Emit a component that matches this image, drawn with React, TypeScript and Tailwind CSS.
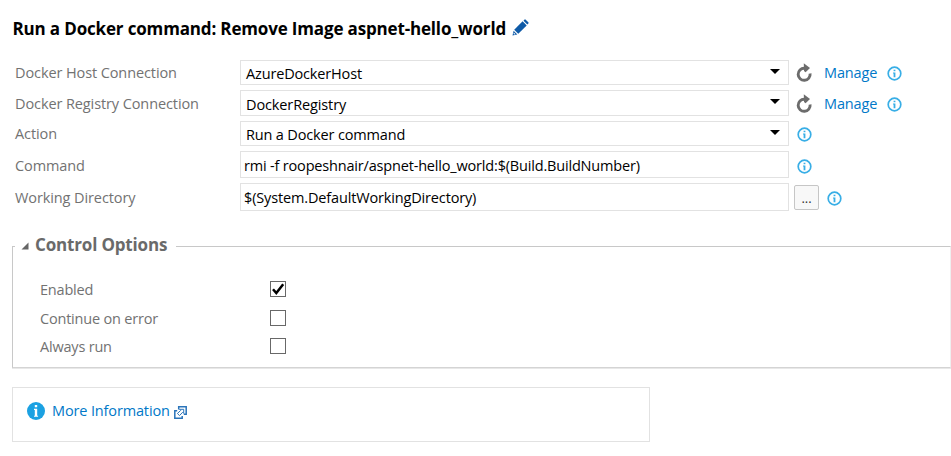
import type { ReactNode } from 'react';

function InfoIcon() {
  return (
    <svg className="block h-[15px] w-[15px] shrink-0" viewBox="0 0 15 15">
      <circle cx="7.5" cy="7.5" r="6.3" fill="#fff" stroke="#38aee6" strokeWidth="1.7" />
      <rect x="6.6" y="3.7" width="1.8" height="1.5" fill="#38aee6" />
      <path d="M6 6.4h2.4v4.8H6.6V7.4H6z" fill="#38aee6" />
    </svg>
  );
}

function RefreshIcon() {
  return (
    <svg className="block h-[19px] w-[17px] shrink-0" viewBox="0 0 17 19">
      <path d="M10 5.3H8.4a6 6 0 1 0 5.7 5.2" fill="none" stroke="#6c6c6c" strokeWidth="2.9" />
      <path d="M7.8 .2 14 4.9 9.6 9.2 8 8z" fill="#6c6c6c" />
    </svg>
  );
}

function PencilIcon() {
  return (
    <svg className="block h-[17px] w-[17px] shrink-0" viewBox="0 0 17 17">
      <path d="M.5 16.5 1.6 11.7 5.3 15.4z" fill="#0e5aa7" />
      <path d="M2.2 10.7 10.6 2.3 14.7 6.4 6.3 14.8z" fill="#0e5aa7" />
      <path d="M11.5 1.7 12.6.6Q13.1.1 13.7.7L16.3 3.3Q16.9 3.9 16.4 4.4L15.3 5.5z" fill="#0e5aa7" />
      <path d="M1.8 13.4 3.6 15.2 2.2 15.5 1.5 14.8z" fill="#fff" />
    </svg>
  );
}

function ExternalIcon() {
  return (
    <svg className="block h-[13px] w-[13px] shrink-0" viewBox="0 0 13 13" fill="none" stroke="#2a74ba" strokeWidth="1.5">
      <path d="M4.7 3.6V.8h7.5v7.5H9.8" />
      <path d="M3.2 4.8H.8v7.4h7.4V9.9" />
      <path d="M5.6 3.3h4.1v4.1L8.6 6.3 5.5 9.6 3.4 7.5 6.7 4.4z" strokeWidth="1" />
    </svg>
  );
}

function Field({
  label,
  labelClass,
  height,
  value,
  valueClass,
  select = false,
  children,
}: {
  label: string;
  labelClass: string;
  height: string;
  value: string;
  valueClass: string;
  select?: boolean;
  children: ReactNode;
}) {
  return (
    <div className={`flex items-center ${height}`}>
      <div className={`w-[225px] shrink-0 tracking-[-0.1px] text-[#727272] ${labelClass}`}>{label}</div>
      <div className="flex h-full w-[549px] shrink-0 items-center justify-between border border-[#e2e2e2]">
        <span className={`text-black ${select ? 'pl-[5px]' : 'pl-[3px]'} ${valueClass}`}>{value}</span>
        {select && (
          <svg className="mr-[8px] mb-[3px] block h-[5px] w-[10px]" viewBox="0 0 10 5">
            <path d="M0 0h10L5 5z" fill="#000" />
          </svg>
        )}
      </div>
      {children}
    </div>
  );
}

function Connection({ className }: { className: string }) {
  return (
    <div className={`flex items-center ${className}`}>
      <div className="mb-[1px] ml-[7px]"><RefreshIcon /></div>
      <span className="ml-[11px] w-[62.5px] tracking-[-0.15px] text-[#0078c8]">Manage</span>
      <InfoIcon />
    </div>
  );
}

function Option({ label, checked = false }: { label: string; checked?: boolean }) {
  return (
    <div className="flex h-[16px] items-center">
      <span className="w-[230px] pt-[2px] tracking-[-0.2px] text-[#727272]">{label}</span>
      <span className="flex h-[16px] w-[16px] items-center justify-center border border-[#686868] bg-white">
        {checked && (
          <svg className="block h-[14px] w-[14px]" viewBox="0 0 14 14">
            <path d="M2 7.2 5.3 11 12.2 2.2" fill="none" stroke="#000" strokeWidth="2.5" />
          </svg>
        )}
      </span>
    </div>
  );
}

export default function App() {
  return (
    <div className="h-[456px] w-[951px] overflow-hidden bg-white font-['Open_Sans','Noto_Sans',sans-serif] text-[14.5px] leading-[20px] whitespace-nowrap">
      <div className="flex h-[60px] items-start pt-[18px] pl-[12.5px]">
        <h1 className="w-[499.5px] text-[17px] leading-[22px] font-bold tracking-[-0.16px] text-black">
          Run a Docker command: Remove Image aspnet-hello_world
        </h1>
        <div className="mt-[1px]"><PencilIcon /></div>
      </div>

      <div className="pl-[15px]">
        <Field label="Docker Host Connection" labelClass="" height="h-[25px]" value="AzureDockerHost" valueClass="pt-[2px] tracking-[-0.16px]" select>
          <Connection className="pt-[1px]" />
        </Field>
        <div className="h-[5px]" />
        <Field label="Docker Registry Connection" labelClass="pt-[2px]" height="h-[26px]" value="DockerRegistry" valueClass="pt-[3px] tracking-[-0.12px]" select>
          <Connection className="pt-[2px]" />
        </Field>
        <div className="h-[5px]" />
        <Field label="Action" labelClass="" height="h-[25px]" value="Run a Docker command" valueClass="pt-[2px] tracking-[-0.16px]" select>
          <div className="ml-[8px] pt-[2px]"><InfoIcon /></div>
        </Field>
        <div className="h-[5px]" />
        <Field label="Command" labelClass="pt-[2px]" height="h-[27px]" value="rmi -f roopeshnair/aspnet-hello_world:$(Build.BuildNumber)" valueClass="pt-[2px] tracking-[-0.18px]">
          <div className="ml-[8px] pt-[4px]"><InfoIcon /></div>
        </Field>
        <div className="h-[5px]" />
        <Field label="Working Directory" labelClass="pt-[2px]" height="h-[28px]" value="$(System.DefaultWorkingDirectory)" valueClass="pt-[1px] tracking-[-0.15px]">
          <button className="ml-[5px] flex h-[25px] w-[25px] items-center justify-center rounded-[2px] border border-[#c6c6c6] bg-[#f8f8f8] pt-[2px] text-[13px] text-[#333]">...</button>
          <div className="ml-[8px] pt-[3px]"><InfoIcon /></div>
        </Field>
      </div>

      <fieldset className="mt-[24px] ml-[12px] h-[133px] w-[939px] border border-t-[#c8c8c8] border-r-[#efefef] border-b-[#d4d4d4] border-l-[#c8c8c8] shadow-[0_1px_0_#e8e8e8]">
        <legend className="ml-[2px] flex h-[22px] w-[161px] items-center pl-[6px]">
          <svg className="block h-[8px] w-[8px]" viewBox="0 0 8 8">
            <path d="M7.5.5v7H.5z" fill="#666" />
          </svg>
          <span className="mb-[2px] ml-[6px] text-[17px] font-bold tracking-[-0.17px] text-[#6a6a6a]">Control Options</span>
        </legend>
        <div className="flex flex-col gap-[12.5px] pt-[24px] pl-[27px]">
          <Option label="Enabled" checked />
          <Option label="Continue on error" />
          <Option label="Always run" />
        </div>
      </fieldset>

      <div className="mt-[19px] ml-[12px] flex h-[55px] w-[638px] items-start border border-[#e2e2e2] pt-[14px] pl-[14px]">
        <svg className="block h-[18px] w-[18px]" viewBox="0 0 18 18">
          <circle cx="9" cy="9" r="9" fill="#1ba1e2" />
          <path d="M7.8 3h2.4v2.3H7.8zM7 6.8h3.2v6.9h.9v1.1H7v-1.1h.8V7.9H7z" fill="#fff" />
        </svg>
        <span className="-mt-[1px] ml-[7px] w-[121.5px] tracking-[-0.14px] text-[#0078c8]">More Information</span>
        <div className="mt-[3.5px]"><ExternalIcon /></div>
      </div>
    </div>
  );
}
